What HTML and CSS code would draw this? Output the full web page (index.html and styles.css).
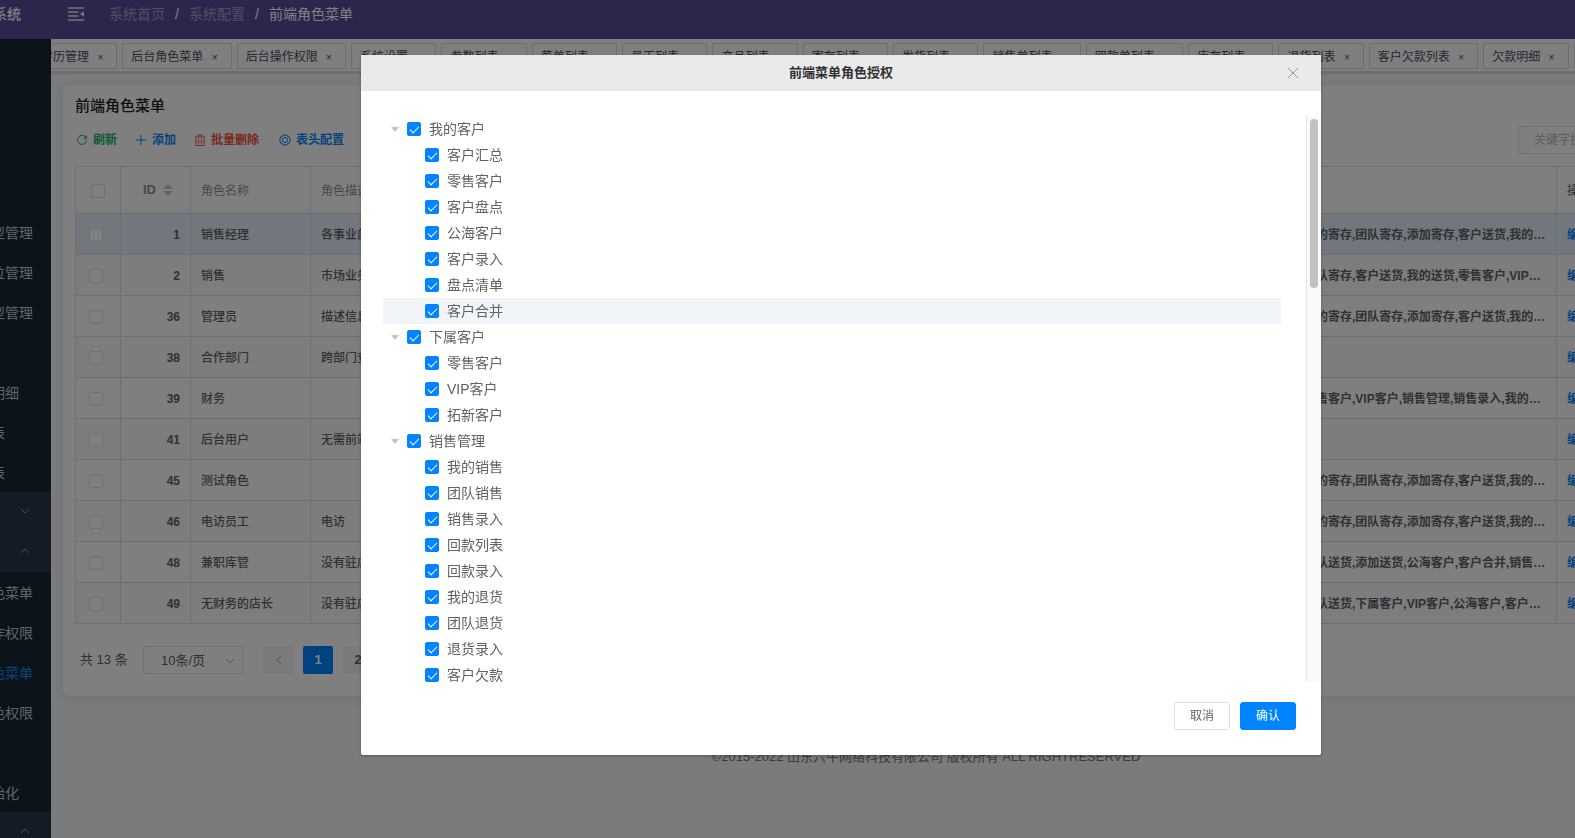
FILE: index.html
```html
<!DOCTYPE html>
<html lang="zh-CN">
<head>
<meta charset="utf-8">
<title>前端角色菜单</title>
<link rel="stylesheet" href="styles.css">
</head>
<body>
<div class="app">
  <header class="topbar">
    <div class="logo">系统</div>
    <button class="fold" aria-label="折叠菜单">
      <svg width="16" height="14" viewBox="0 0 16 14"><path d="M0 1h16M0 5h10.500M0 9h10.500M0 13h16" stroke="currentColor" stroke-width="1.600" fill="none"/><path d="M16 4v6l-4-3z" fill="currentColor"/></svg>
    </button>
    <nav class="crumbs"><a href="#">系统首页</a><i>/</i><a href="#">系统配置</a><i>/</i><span>前端角色菜单</span></nav>
  </header>
  <div class="shell">
    <aside class="side">
      <ul class="menu">
        <li>类型管理</li><li>单位管理</li><li>类型管理</li><li></li><li>款明细</li><li>报表</li><li>报表</li>
        <li class="group"><svg width="10" height="6" viewBox="0 0 10 6"><path d="M1 1l4 4 4-4"/></svg></li>
        <li class="group"><svg width="10" height="6" viewBox="0 0 10 6"><path d="M1 5l4-4 4 4"/></svg></li>
        <li>角色菜单</li><li>操作权限</li><li class="active">角色菜单</li><li>角色权限</li><li></li><li>初始化</li>
        <li class="group"><svg width="10" height="6" viewBox="0 0 10 6"><path d="M1 5l4-4 4 4"/></svg></li>
      </ul>
    </aside>
    <main class="main">
      <div class="tabs">
        <div class="tab-track">
          <span class="tab">学历管理 <button>×</button></span>
          <span class="tab">后台角色菜单 <button>×</button></span>
          <span class="tab">后台操作权限 <button>×</button></span>
          <span class="tab">系统设置 <button>×</button></span>
          <span class="tab">参数列表 <button>×</button></span>
          <span class="tab">菜单列表 <button>×</button></span>
          <span class="tab">员工列表 <button>×</button></span>
          <span class="tab">产品列表 <button>×</button></span>
          <span class="tab">寄存列表 <button>×</button></span>
          <span class="tab">发货列表 <button>×</button></span>
          <span class="tab">销售单列表 <button>×</button></span>
          <span class="tab">回款单列表 <button>×</button></span>
          <span class="tab">库存列表 <button>×</button></span>
          <span class="tab">退货列表 <button>×</button></span>
          <span class="tab">客户欠款列表 <button>×</button></span>
          <span class="tab">欠款明细 <button>×</button></span>
          <span class="tab">角色菜单 <button>×</button></span>
        </div>
      </div>
      <section class="card">
        <h1>前端角色菜单</h1>
        <div class="toolbar">
          <button class="tool green"><svg viewBox="0 0 12 12"><path d="M10.200 4.200A4.500 4.500 0 1 0 10.500 6.500M10.400 1.500v2.900H7.600"/></svg>刷新</button>
          <button class="tool blue"><svg viewBox="0 0 12 12"><path d="M6 1v10M1 6h10"/></svg>添加</button>
          <button class="tool red"><svg viewBox="0 0 12 12"><path d="M1 3h10M4 3V1h4v2M2 3v8.500h8V3M4.700 5v4.500M7.300 5v4.500"/></svg>批量删除</button>
          <button class="tool blue last"><svg viewBox="0 0 12 12"><path d="M4 1.200h4l.7 1.300 1.500.2L11.300 6l-1.100 3.300-1.500.2L8 10.800H4l-.7-1.300-1.500-.2L.7 6l1.100-3.300 1.500-.2z"/><circle cx="6" cy="6" r="2.600"/></svg>表头配置</button>
          <input class="search" type="text" placeholder="关键字搜索" aria-label="关键字搜索">
        </div>
        <table class="grid">
          <colgroup><col class="c-check"><col class="c-id"><col class="c-name"><col><col class="c-menu"><col class="c-act"></colgroup>
          <thead><tr>
            <th class="pick"><input type="checkbox" aria-label="全选"></th>
            <th class="idh"><span>ID<svg width="10" height="12" viewBox="0 0 10 12"><path d="M0 5l5-5 5 5zM0 7h10l-5 5z"/></svg></span></th>
            <th>角色名称</th><th>角色描述</th><th></th><th class="act">操作</th>
          </tr></thead>
          <tbody>
            <tr class="current"><td class="pick"><input type="checkbox" aria-label="1"></td><td class="num">1</td><td>销售经理</td><td>各事业部</td><td>我的寄存,团队寄存,添加寄存,客户送货,我的送货</td><td><a href="#">编辑</a></td></tr>
            <tr><td class="pick"><input type="checkbox" aria-label="2"></td><td class="num">2</td><td>销售</td><td>市场业务</td><td>团队寄存,客户送货,我的送货,零售客户,VIP客户</td><td><a href="#">编辑</a></td></tr>
            <tr><td class="pick"><input type="checkbox" aria-label="36"></td><td class="num">36</td><td>管理员</td><td>描述信息</td><td>我的寄存,团队寄存,添加寄存,客户送货,我的送货</td><td><a href="#">编辑</a></td></tr>
            <tr><td class="pick"><input type="checkbox" aria-label="38"></td><td class="num">38</td><td>合作部门</td><td>跨部门查看</td><td></td><td><a href="#">编辑</a></td></tr>
            <tr><td class="pick"><input type="checkbox" aria-label="39"></td><td class="num">39</td><td>财务</td><td></td><td>零售客户,VIP客户,销售管理,销售录入,我的销售</td><td><a href="#">编辑</a></td></tr>
            <tr><td class="pick"><input type="checkbox" aria-label="41"></td><td class="num">41</td><td>后台用户</td><td>无需前端</td><td></td><td><a href="#">编辑</a></td></tr>
            <tr><td class="pick"><input type="checkbox" aria-label="45"></td><td class="num">45</td><td>测试角色</td><td></td><td>我的寄存,团队寄存,添加寄存,客户送货,我的送货</td><td><a href="#">编辑</a></td></tr>
            <tr><td class="pick"><input type="checkbox" aria-label="46"></td><td class="num">46</td><td>电访员工</td><td>电访</td><td>我的寄存,团队寄存,添加寄存,客户送货,我的送货</td><td><a href="#">编辑</a></td></tr>
            <tr><td class="pick"><input type="checkbox" aria-label="48"></td><td class="num">48</td><td>兼职库管</td><td>没有驻店</td><td>团队送货,添加送货,公海客户,客户合并,销售管理</td><td><a href="#">编辑</a></td></tr>
            <tr><td class="pick"><input type="checkbox" aria-label="49"></td><td class="num">49</td><td>无财务的店长</td><td>没有驻店</td><td>团队送货,下属客户,VIP客户,公海客户,客户合并</td><td><a href="#">编辑</a></td></tr>
          </tbody>
        </table>
        <div class="pager">
          <span class="total">共 13 条</span>
          <span class="size"><select aria-label="每页条数"><option>10条/页</option></select><svg width="10" height="6" viewBox="0 0 10 6"><path d="M1 1l4 4 4-4"/></svg></span>
          <button class="page" aria-label="上一页"><svg width="7" height="10" viewBox="0 0 7 10"><path d="M6 1L2 5l4 4"/></svg></button>
          <button class="page on">1</button>
          <button class="page">2</button>
        </div>
      </section>
      <footer class="copy">©2015-2022 山东六牛网络科技有限公司 版权所有 ALL RIGHTRESERVED</footer>
    </main>
  </div>
</div>

<div class="mask">
  <div class="dialog" role="dialog" aria-labelledby="dlg-title">
    <div class="dialog-head">
      <h2 id="dlg-title">前端菜单角色授权</h2>
      <button class="close" aria-label="关闭"><svg width="12" height="12" viewBox="0 0 12 12"><path d="M1 1l10 10M11 1L1 11"/></svg></button>
    </div>
    <div class="dialog-body">
      <div class="tree">
        <label class="node parent"><input type="checkbox" checked>我的客户</label>
        <label class="node"><input type="checkbox" checked>客户汇总</label>
        <label class="node"><input type="checkbox" checked>零售客户</label>
        <label class="node"><input type="checkbox" checked>客户盘点</label>
        <label class="node"><input type="checkbox" checked>公海客户</label>
        <label class="node"><input type="checkbox" checked>客户录入</label>
        <label class="node"><input type="checkbox" checked>盘点清单</label>
        <label class="node hover"><input type="checkbox" checked>客户合并</label>
        <label class="node parent"><input type="checkbox" checked>下属客户</label>
        <label class="node"><input type="checkbox" checked>零售客户</label>
        <label class="node"><input type="checkbox" checked>VIP客户</label>
        <label class="node"><input type="checkbox" checked>拓新客户</label>
        <label class="node parent"><input type="checkbox" checked>销售管理</label>
        <label class="node"><input type="checkbox" checked>我的销售</label>
        <label class="node"><input type="checkbox" checked>团队销售</label>
        <label class="node"><input type="checkbox" checked>销售录入</label>
        <label class="node"><input type="checkbox" checked>回款列表</label>
        <label class="node"><input type="checkbox" checked>回款录入</label>
        <label class="node"><input type="checkbox" checked>我的退货</label>
        <label class="node"><input type="checkbox" checked>团队退货</label>
        <label class="node"><input type="checkbox" checked>退货录入</label>
        <label class="node"><input type="checkbox" checked>客户欠款</label>
      </div>
      <div class="scrollbar"><div class="thumb"></div></div>
    </div>
    <div class="dialog-foot">
      <button class="btn">取消</button>
      <button class="btn primary">确认</button>
    </div>
  </div>
</div>
</body>
</html>
```

FILE: styles.css
```css
* { box-sizing: border-box; }
body {
  margin: 0;
  height: 100vh;
  overflow: hidden;
  background: #f4f6fa;
  color: #606266;
  font-family: "Liberation Sans", "Noto Sans CJK SC", sans-serif;
  font-size: 14px;
  line-height: 20px;
}
button, input, select { font-family: inherit; }
button { border: 0; padding: 0; background: none; color: inherit; line-height: inherit; cursor: pointer; }
a { text-decoration: none; color: inherit; }
svg { fill: none; stroke: currentColor; }

/* The frame is wider than the window on both sides */
.app {
  display: flex;
  flex-direction: column;
  min-height: 100vh;
  margin: -11px -214px 0 -107px;
}
.topbar {
  display: flex;
  align-items: center;
  flex: none;
  height: 50px;
  background: #564e98;
  color: #fff;
}
.logo { width: 158px; padding-right: 30px; text-align: right; font-weight: 500; }
.fold { display: flex; margin-left: 17px; color: #e6e6ee; }
.fold path:last-child { stroke: none; }
.crumbs { display: flex; margin-left: 25px; }
.crumbs a { color: #a09cc0; }
.crumbs i { width: 24px; text-align: center; font-style: normal; }

.shell { display: flex; flex: 1; }
.side { flex: none; width: 158px; background: #182836; color: #bfcbd9; }
.menu { list-style: none; margin: 0; padding: 173px 0 0; }
.menu li { height: 40px; line-height: 42px; padding-left: 84px; }
.menu .group {
  display: flex;
  align-items: center;
  justify-content: flex-end;
  padding-right: 21px;
  padding-bottom: 2px;
  background: #2a374b;
  color: #8b95a3;
}
.menu .active { color: #1989fa; }

.main { flex: 1; min-width: 0; }
.tabs {
  height: 33px;
  padding-top: 4px;
  overflow: hidden;
  background: #fff;
  border-bottom: 1px solid #d8dce5;
  box-shadow: 0 1px 3px rgba(0, 0, 0, .2);
}
.tab-track { display: flex; gap: 5px; margin-left: -19px; }
.tab {
  flex: none;
  height: 26px;
  padding: 0 8px;
  border: 1px solid #d8dce5;
  color: #495060;
  font-size: 12px;
  line-height: 26px;
  white-space: nowrap;
}
.tab button { width: 16px; font-size: 10px; text-align: center; }

.card {
  margin: 13px 12px 0;
  padding: 10px 12px 22px;
  border-radius: 6px;
  background: #fff;
  box-shadow: 0 2px 12px rgba(0, 0, 0, .1);
}
.card h1 { margin: 0; color: #222; font-size: 15px; font-weight: 500; line-height: 22px; }
.toolbar { display: flex; align-items: center; gap: 18px; margin-top: 9px; padding-left: 1px; }
.tool { display: flex; align-items: center; gap: 5px; font-size: 12px; font-weight: 700; }
.tool svg { width: 12px; height: 12px; }
.tool.last { margin-left: 2px; }
.green { color: #13b66a; }
.blue { color: #0a84ff; }
.red { color: #f5503f; }
.search {
  width: 247px;
  height: 28px;
  margin-left: auto;
  padding: 0 15px;
  border: 1px solid #dcdfe6;
  border-radius: 4px;
  background: #fff;
  font-size: 12px;
}
.search::placeholder { color: #b4b8c0; }

.grid {
  width: 100%;
  margin-top: 12px;
  border-collapse: collapse;
  table-layout: fixed;
  font-size: 12px;
}
.c-check { width: 45px; }
.c-id { width: 70px; }
.c-name { width: 120px; }
.c-menu { width: 263px; }
.c-act { width: 208px; }
.grid th, .grid td {
  padding: 2px 10px 0;
  border: 1px solid #d6e2e6;
  overflow: hidden;
  text-align: left;
  text-overflow: ellipsis;
  white-space: nowrap;
}
.grid th { height: 47px; color: #909399; font-weight: 400; }
.grid td { height: 41px; font-weight: 500; }
.grid td:nth-child(5), .grid .num, .grid td a { font-weight: 700; }
.grid .num { text-align: right; }
.grid tbody tr:nth-child(even) { background: #fafafa; }
.grid tbody .current { background: #e2effa; }
.grid td a { color: #0a84ff; }
.grid .act { color: #606266; }
.grid .pick { padding: 2px 13px 0; text-overflow: clip; }
.grid th.pick { padding: 2px 15px 0; }
.grid .idh { padding-top: 0; text-align: right; font-weight: 700; font-size: 13px; }
.idh span { display: inline-flex; align-items: center; gap: 7px; padding-right: 7px; }
.idh svg { fill: #c0c4cc; stroke: none; }

input[type="checkbox"] {
  appearance: none;
  display: block;
  flex: none;
  width: 14px;
  height: 14px;
  margin: 0;
  border: 1px solid #dcdfe6;
  border-radius: 2px;
  background: #fff;
}
input[type="checkbox"]:checked { border-color: #0084ff; background: #0084ff; }
input[type="checkbox"]:checked::after {
  content: "";
  display: block;
  width: 4px;
  height: 8px;
  margin: 1px 0 0 4px;
  border: solid #fff;
  border-width: 0 1px 1px 0;
  transform: rotate(45deg);
  transform-origin: center;
}

.pager { display: flex; align-items: center; gap: 10px; margin-top: 22px; padding-left: 5px; font-size: 13px; }
.total { width: 53px; }
.size { position: relative; margin-right: 10px; }
.size select {
  appearance: none;
  display: block;
  width: 100px;
  height: 28px;
  padding: 0 17px;
  border: 1px solid #dcdfe6;
  border-radius: 3px;
  background: #fff;
  color: #606266;
  font-size: 13px;
}
.size svg { position: absolute; right: 8px; top: 12px; color: #b4b8c0; }
.page {
  display: flex;
  align-items: center;
  justify-content: center;
  width: 30px;
  height: 28px;
  border-radius: 2px;
  background: #f4f4f5;
  font-size: 13px;
  font-weight: 700;
}
.page svg { color: #a0a4ac; }
.page.on { background: #0084ff; color: #fff; }
.copy { margin-top: 51px; padding-left: 12px; text-align: center; font-size: 13px; color: #777; }

/* Dialog */
.mask {
  position: fixed;
  inset: 0 -214px 0 -107px;
  display: flex;
  justify-content: center;
  align-items: flex-start;
  padding-top: 55px;
  background: rgba(0, 0, 0, .5);
}
.dialog {
  display: flex;
  flex-direction: column;
  width: 960px;
  height: calc(100vh - 138px);
  border-radius: 2px;
  background: #fff;
  box-shadow: 0 1px 3px rgba(0, 0, 0, .3);
}
.dialog-head {
  display: flex;
  align-items: center;
  flex: none;
  height: 36px;
  padding: 0 22px;
  background: #eaeaea;
}
.dialog-head h2 { flex: 1; margin: 0; padding-left: 12px; color: #303133; font-size: 13px; font-weight: 700; line-height: 22px; text-align: center; }
.close { display: flex; color: #909399; }
.dialog-body { display: flex; flex: 1; min-height: 0; margin-top: 25px; overflow: hidden; }
.tree { flex: 1; padding: 0 25px 0 22px; }
.node { display: flex; align-items: center; gap: 8px; height: 26px; padding-left: 42px; }
.node.parent { padding-left: 8px; }
.node.parent::before {
  content: "";
  border: 4px solid transparent;
  border-top: 5px solid #c0c4cc;
  border-bottom: 0;
}
.node.hover { background: #f1f5f9; }
.scrollbar { flex: none; width: 15px; padding: 3px 3px 0; border-left: 1px solid #e6e6e6; background: #fafafa; }
.thumb { height: 30%; border-radius: 4px; background: #c1c1c1; }
.dialog-foot { display: flex; flex: none; justify-content: flex-end; gap: 10px; padding: 20px 25px 25px; }
.btn { width: 56px; height: 28px; border: 1px solid #dcdfe6; border-radius: 3px; font-size: 12px; }
.btn.primary { border-color: #0084ff; background: #0084ff; color: #fff; }
```
